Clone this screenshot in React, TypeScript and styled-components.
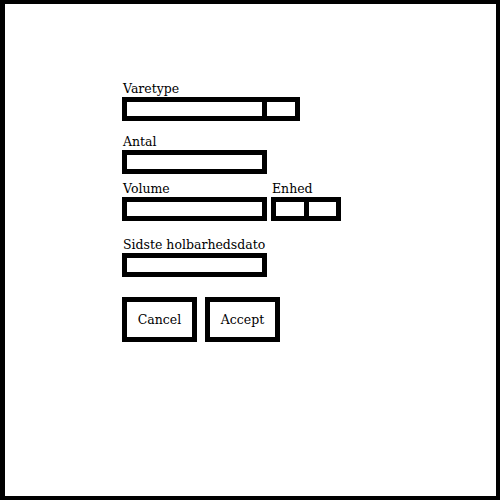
import React from "react";
import styled, { createGlobalStyle } from "styled-components";

const GlobalStyle = createGlobalStyle`
  html, body {
    margin: 0;
    padding: 0;
    background: #fff;
  }
  body {
    font-family: "DejaVu Serif", "Liberation Serif", serif;
    color: #000;
  }
`;

const App = () => {
  return (
    <>
      <GlobalStyle />
      <Frame>
        <Field $gap={0}>
          <Label>Varetype</Label>
          <InputBox $width={178}>
            <Cell $width={135} />
            <Cell />
          </InputBox>
        </Field>

        <Field $gap={13}>
          <Label>Antal</Label>
          <InputBox $width={145}>
            <Cell />
          </InputBox>
        </Field>

        <FieldRow $gap={7}>
          <Field $gap={0}>
            <Label>Volume</Label>
            <InputBox $width={145}>
              <Cell />
            </InputBox>
          </Field>
          <Field $gap={0}>
            <Label $indent={1}>Enhed</Label>
            <InputBox $width={70}>
              <Cell $width={28} />
              <Cell />
            </InputBox>
          </Field>
        </FieldRow>

        <Field $gap={16}>
          <Label>Sidste holbarhedsdato</Label>
          <InputBox $width={145}>
            <Cell />
          </InputBox>
        </Field>

        <ButtonRow>
          <Button>Cancel</Button>
          <Button>Accept</Button>
        </ButtonRow>
      </Frame>
    </>
  );
};
export default App;

const Frame = styled.div`
  width: 500px;
  height: 500px;
  box-sizing: border-box;
  border: 4px solid #000;
  border-left-width: 5px;
  padding: 77px 0 0 117px;

  display: flex;
  flex-direction: column;
  align-items: flex-start;
`;

const Field = styled.div<{ $gap: number }>`
  margin-top: ${(props) => props.$gap}px;
  display: flex;
  flex-direction: column;
  gap: 1px;
`;

const FieldRow = styled.div<{ $gap: number }>`
  margin-top: ${(props) => props.$gap}px;
  display: flex;
  gap: 4px;
`;

const Label = styled.label<{ $indent?: number }>`
  font-size: 12.5px;
  line-height: 15px;
  height: 15px;
  padding-left: ${(props) => props.$indent ?? 1}px;
  white-space: nowrap;
`;

const InputBox = styled.div<{ $width: number }>`
  width: ${(props) => props.$width}px;
  height: 24px;
  box-sizing: border-box;
  border: 5px solid #000;
  display: flex;
  background: #fff;
`;

const Cell = styled.input<{ $width?: number }>`
  ${(props) => (props.$width ? `flex: 0 0 ${props.$width}px;` : "flex: 1 1 0;")}
  min-width: 0;
  height: 100%;
  box-sizing: border-box;
  border: 0;
  padding: 0;
  margin: 0;
  outline: none;
  background: #fff;

  & + & {
    border-left: 5px solid #000;
  }
`;

const ButtonRow = styled.div`
  margin-top: 20px;
  display: flex;
  gap: 8px;
`;

const Button = styled.button`
  width: 75px;
  height: 45px;
  box-sizing: border-box;
  border: 5px solid #000;
  border-radius: 0;
  background: #fff;
  padding: 0;

  font-family: "DejaVu Serif", "Liberation Serif", serif;
  font-size: 12.5px;
  color: #000;
`;
